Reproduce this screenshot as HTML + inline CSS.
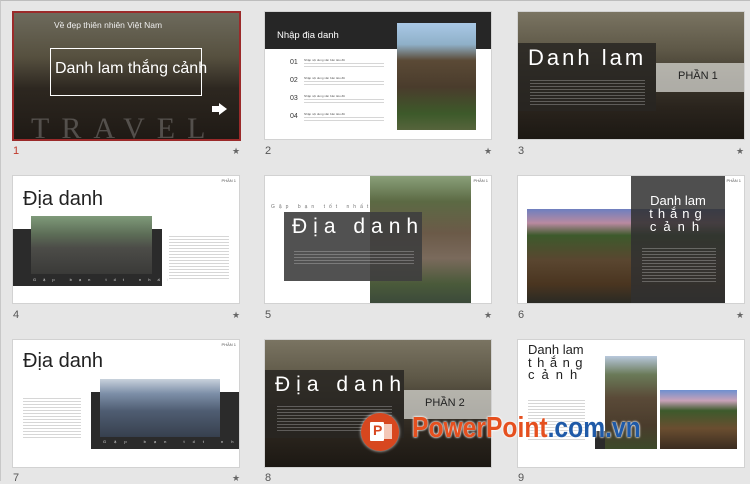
<!DOCTYPE html>
<html><head><meta charset="utf-8"><style>
*{margin:0;padding:0;box-sizing:border-box}
body{width:750px;height:481px;background:#e6e6e6;position:relative;overflow:hidden;font-family:"Liberation Sans","DejaVu Sans",sans-serif;border-top:1px solid #bdbdbd;border-left:1px solid #c8c8c8}
.a{position:absolute}
.s{position:absolute;width:226px;height:127px;background:#fff;overflow:hidden;box-shadow:0 0 0 1px #d2d2d2}
.n{position:absolute;font-size:11px;color:#555}
.st{position:absolute;font-size:9px;color:#666}
.ph{background:linear-gradient(180deg,#7a7462 0%,#5e5847 30%,#3b352b 55%,#2a241d 75%,#1c1813 100%)}
.t{position:absolute;background:repeating-linear-gradient(180deg,rgba(120,120,120,.3) 0 1px,transparent 1px 3px)}
.tw{position:absolute;background:repeating-linear-gradient(180deg,rgba(220,220,220,.3) 0 1px,transparent 1px 3px)}
.tiny{position:absolute;font-size:3px;color:#555}
</style></head><body>

<!-- Slide 1 -->
<div class="a" style="left:11px;top:10px;width:229px;height:130px;border:2px solid #9b2a2a"></div>
<div class="s ph" style="left:13px;top:12px;width:225px;height:126px;box-shadow:none;background:linear-gradient(180deg,#6d6a5c 0%,#56503f 35%,#2d2720 60%,#1f1a15 100%)">
  <div class="a" style="left:40px;top:7px;font-size:8.5px;color:#eee">Về đẹp thiên nhiên Việt Nam</div>
  <div class="a" style="left:36px;top:35px;width:152px;height:48px;border:1px solid #fff"></div>
  <div class="a" style="left:41px;top:47px;font-size:16px;color:#fff;white-space:nowrap">Danh lam thắng cảnh</div>
  <div class="a" style="left:205px;top:90px;width:0;height:0;border-left:8px solid #fff;border-top:6px solid transparent;border-bottom:6px solid transparent"></div>
  <div class="a" style="left:198px;top:93px;width:8px;height:6px;background:#fff"></div>
  <div class="a" style="left:17px;top:99px;font-family:'Liberation Serif',serif;font-size:30px;letter-spacing:12px;color:rgba(200,200,200,.3);white-space:nowrap">TRAVEL</div>
</div>
<div class="n" style="left:12px;top:144px;color:#c0392b">1</div>
<div class="st" style="left:231px;top:145px">★</div>

<!-- Slide 2 -->
<div class="s" style="left:264px;top:11px">
  <div class="a" style="left:0;top:0;width:226px;height:37px;background:#262626"></div>
  <div class="a" style="left:12px;top:18px;font-size:9.5px;color:#fff">Nhập địa danh</div>
  <div class="a" style="left:132px;top:11px;width:79px;height:107px;background:linear-gradient(180deg,#a9c8e6 0%,#8fb0c8 20%,#5b4a36 35%,#4a3c2c 60%,#3d5a2a 85%,#56643c 100%)"></div>
  <div class="a" style="left:25px;top:47px;font-size:7px;color:#333">01</div>
  <div class="a" style="left:25px;top:65px;font-size:7px;color:#333">02</div>
  <div class="a" style="left:25px;top:83px;font-size:7px;color:#333">03</div>
  <div class="a" style="left:25px;top:101px;font-size:7px;color:#333">04</div>
  <div class="tiny" style="left:39px;top:46px">Nhập nội dung văn bản tiêu đề</div><div class="t" style="left:39px;top:51px;width:80px;height:5px"></div>
  <div class="tiny" style="left:39px;top:64px">Nhập nội dung văn bản tiêu đề</div><div class="t" style="left:39px;top:69px;width:80px;height:5px"></div>
  <div class="tiny" style="left:39px;top:82px">Nhập nội dung văn bản tiêu đề</div><div class="t" style="left:39px;top:87px;width:80px;height:5px"></div>
  <div class="tiny" style="left:39px;top:100px">Nhập nội dung văn bản tiêu đề</div><div class="t" style="left:39px;top:105px;width:80px;height:5px"></div>
</div>
<div class="n" style="left:264px;top:144px">2</div>
<div class="st" style="left:483px;top:145px">★</div>

<!-- Slide 3 -->
<div class="s ph" style="left:517px;top:11px">
  <div class="a" style="left:0;top:31px;width:138px;height:68px;background:rgba(40,38,34,.85)"></div>
  <div class="a" style="left:10px;top:33px;font-size:22px;letter-spacing:3px;color:#fff;white-space:nowrap">Danh lam</div>
  <div class="tw" style="left:12px;top:68px;width:115px;height:25px"></div>
  <div class="a" style="left:138px;top:51px;width:88px;height:29px;background:rgba(215,215,210,.75)"></div>
  <div class="a" style="left:160px;top:58px;font-size:11px;color:#222">PHẦN 1</div>
</div>
<div class="n" style="left:517px;top:144px">3</div>
<div class="st" style="left:735px;top:145px">★</div>

<!-- Slide 4 -->
<div class="s" style="left:12px;top:175px">
  <div class="a" style="left:10px;top:12px;font-size:20px;color:#222">Địa danh</div>
  <div class="a" style="right:3px;top:2px;font-size:4px;color:#555">PHẦN 1</div>
  <div class="a" style="left:0;top:53px;width:149px;height:57px;background:#2b2b2b"></div>
  <div class="a" style="left:18px;top:40px;width:121px;height:58px;background:linear-gradient(180deg,#7f9a7a 0%,#5e6f58 30%,#4c4c48 55%,#3a3a38 100%)"></div>
  <div class="a" style="left:20px;top:101px;font-size:4px;letter-spacing:7px;color:#ddd;white-space:nowrap">Gặp bạn tốt nhất</div>
  <div class="t" style="left:156px;top:60px;width:60px;height:45px"></div>
</div>
<div class="n" style="left:12px;top:308px">4</div>
<div class="st" style="left:231px;top:309px">★</div>

<!-- Slide 5 -->
<div class="s" style="left:264px;top:175px">
  <div class="a" style="left:105px;top:0;width:101px;height:127px;background:linear-gradient(180deg,#8aa07a 0%,#5c6a44 20%,#6b5a48 45%,#7a6a5c 65%,#4a5a3a 85%,#3c4a3a 100%)"></div>
  <div class="a" style="right:3px;top:2px;font-size:4px;color:#555">PHẦN 1</div>
  <div class="a" style="left:6px;top:28px;font-size:5px;letter-spacing:4px;color:#777;white-space:nowrap">Gặp bạn tốt nhất</div>
  <div class="a" style="left:19px;top:36px;width:138px;height:69px;background:rgba(62,62,62,.9)"></div>
  <div class="a" style="left:27px;top:39px;font-size:21px;letter-spacing:6px;color:#fff;white-space:nowrap">Địa danh</div>
  <div class="tw" style="left:29px;top:75px;width:120px;height:14px"></div>
</div>
<div class="n" style="left:264px;top:308px">5</div>
<div class="st" style="left:483px;top:309px">★</div>

<!-- Slide 6 -->
<div class="s" style="left:517px;top:175px">
  <div class="a" style="left:9px;top:33px;width:198px;height:94px;background:linear-gradient(180deg,#6e7fbf 0%,#b98aa0 15%,#3d5a2c 28%,#5a4630 55%,#4a3520 80%,#2a2a24 100%)"></div>
  <div class="a" style="left:113px;top:0;width:94px;height:127px;background:rgba(48,48,48,.85)"></div>
  <div class="a" style="right:3px;top:2px;font-size:4px;color:#555">PHẦN 1</div>
  <div class="a" style="left:113px;top:18px;width:94px;text-align:center;font-size:13px;line-height:13px;color:#fff">Danh lam<br><span style="letter-spacing:5px">thắng</span><br><span style="letter-spacing:7px">cảnh</span></div>
  <div class="tw" style="left:124px;top:72px;width:74px;height:36px"></div>
</div>
<div class="n" style="left:517px;top:308px">6</div>
<div class="st" style="left:735px;top:309px">★</div>

<!-- Slide 7 -->
<div class="s" style="left:12px;top:339px">
  <div class="a" style="left:10px;top:10px;font-size:20px;color:#222">Địa danh</div>
  <div class="a" style="right:3px;top:2px;font-size:4px;color:#555">PHẦN 1</div>
  <div class="a" style="left:78px;top:52px;width:148px;height:57px;background:#2b2b2b"></div>
  <div class="a" style="left:87px;top:39px;width:120px;height:58px;background:linear-gradient(180deg,#c9d2dc 0%,#7d8fa8 25%,#4f5d72 55%,#37404e 100%)"></div>
  <div class="a" style="left:90px;top:99px;font-size:4px;letter-spacing:8px;color:#ddd;white-space:nowrap">Gặp bạn tốt nhất</div>
  <div class="t" style="left:10px;top:58px;width:58px;height:42px"></div>
</div>
<div class="n" style="left:12px;top:471px">7</div>
<div class="st" style="left:231px;top:472px">★</div>

<!-- Slide 8 -->
<div class="s ph" style="left:264px;top:339px">
  <div class="a" style="left:0;top:30px;width:139px;height:68px;background:rgba(40,38,34,.85)"></div>
  <div class="a" style="left:10px;top:33px;font-size:21px;letter-spacing:6px;color:#fff;white-space:nowrap">Địa danh</div>
  <div class="tw" style="left:12px;top:66px;width:115px;height:25px"></div>
  <div class="a" style="left:139px;top:50px;width:87px;height:29px;background:rgba(215,215,210,.75)"></div>
  <div class="a" style="left:160px;top:57px;font-size:11px;color:#222">PHẦN 2</div>
</div>
<div class="n" style="left:264px;top:471px">8</div>

<!-- Slide 9 -->
<div class="s" style="left:517px;top:339px">
  <div class="a" style="left:10px;top:4px;font-size:13px;line-height:12.5px;color:#222">Danh lam<br><span style="letter-spacing:5.5px">thắng</span><br><span style="letter-spacing:7px">cảnh</span></div>
  <div class="a" style="left:77px;top:91px;width:10px;height:18px;background:#2b2b2b"></div>
  <div class="a" style="left:87px;top:16px;width:52px;height:93px;background:linear-gradient(180deg,#b8c8dc 0%,#6a7a58 20%,#5a4a38 45%,#4a3c2c 75%,#3d4a2a 100%)"></div>
  <div class="a" style="left:142px;top:50px;width:77px;height:59px;background:linear-gradient(180deg,#6e8fcf 0%,#c8a2b8 18%,#3d5a2c 35%,#6a4e30 65%,#3a2c20 100%)"></div>
  <div class="t" style="left:10px;top:60px;width:57px;height:40px"></div>
</div>
<div class="n" style="left:517px;top:471px">9</div>

<!-- Watermark -->
<div class="a" style="left:360px;top:412px;width:38px;height:38px;border-radius:50%;background:#d7471f;box-shadow:0 0 3px rgba(255,255,255,.9)"></div>
<div class="a" style="left:369px;top:421px;width:14px;height:19px;background:#fff;border-radius:1px"></div>
<div class="a" style="left:372px;top:421px;font-size:14px;font-weight:bold;color:#d7471f">P</div>
<div class="a" style="left:383px;top:423px;width:8px;height:15px;background:#f4c8b8"></div>
<div class="a" style="left:411px;top:411px;font-size:29px;font-weight:bold;white-space:nowrap;transform:scaleX(.85);transform-origin:left;text-shadow:0 0 2px #fff,0 0 3px #fff"><span style="color:#e5501f">PowerPoint</span><span style="color:#1f5aa8">.com.vn</span></div>
</body></html>
